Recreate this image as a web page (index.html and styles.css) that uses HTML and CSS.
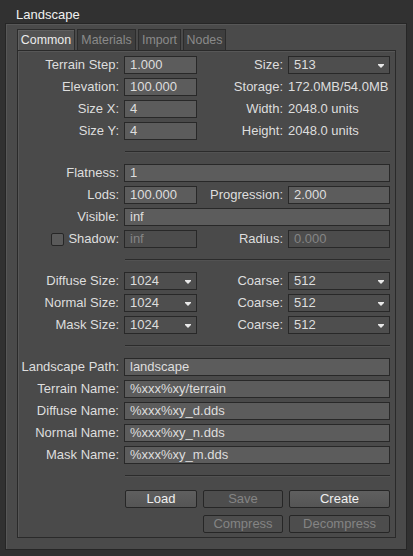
FILE: index.html
```html
<!DOCTYPE html>
<html>
<head>
<meta charset="utf-8">
<link rel="stylesheet" href="styles.css">
</head>
<body>
<div class="window">
  <div class="titlebar">Landscape</div>
  <div class="body">
    <div class="tabs">
      <div class="tab active t1">Common</div>
      <div class="tab t2">Materials</div>
      <div class="tab t3">Import</div>
      <div class="tab t4">Nodes</div>
    </div>
    <div class="panel">
      <div class="grid">
        <div class="lbl">Terrain Step:</div>
        <div class="field">1.000</div>
        <div class="lbl">Size:</div>
        <div class="field select">513<span class="arrow"></span></div>

        <div class="lbl">Elevation:</div>
        <div class="field">100.000</div>
        <div class="lbl">Storage:</div>
        <div class="val">172.0MB/54.0MB</div>

        <div class="lbl">Size X:</div>
        <div class="field">4</div>
        <div class="lbl">Width:</div>
        <div class="val">2048.0 units</div>

        <div class="lbl">Size Y:</div>
        <div class="field">4</div>
        <div class="lbl">Height:</div>
        <div class="val">2048.0 units</div>
      </div>
      <div class="sep"></div>
      <div class="grid">
        <div class="lbl">Flatness:</div>
        <div class="field wide">1</div>

        <div class="lbl">Lods:</div>
        <div class="field">100.000</div>
        <div class="lbl">Progression:</div>
        <div class="field">2.000</div>

        <div class="lbl">Visible:</div>
        <div class="field wide">inf</div>

        <div class="lbl"><span class="check"></span>Shadow:</div>
        <div class="field disabled">inf</div>
        <div class="lbl">Radius:</div>
        <div class="field disabled">0.000</div>
      </div>
      <div class="sep"></div>
      <div class="grid">
        <div class="lbl">Diffuse Size:</div>
        <div class="field select">1024<span class="arrow"></span></div>
        <div class="lbl">Coarse:</div>
        <div class="field select">512<span class="arrow"></span></div>

        <div class="lbl">Normal Size:</div>
        <div class="field select">1024<span class="arrow"></span></div>
        <div class="lbl">Coarse:</div>
        <div class="field select">512<span class="arrow"></span></div>

        <div class="lbl">Mask Size:</div>
        <div class="field select">1024<span class="arrow"></span></div>
        <div class="lbl">Coarse:</div>
        <div class="field select">512<span class="arrow"></span></div>
      </div>
      <div class="sep"></div>
      <div class="grid">
        <div class="lbl">Landscape Path:</div>
        <div class="field wide">landscape</div>
        <div class="lbl">Terrain Name:</div>
        <div class="field wide">%xxx%xy/terrain</div>
        <div class="lbl">Diffuse Name:</div>
        <div class="field wide">%xxx%xy_d.dds</div>
        <div class="lbl">Normal Name:</div>
        <div class="field wide">%xxx%xy_n.dds</div>
        <div class="lbl">Mask Name:</div>
        <div class="field wide">%xxx%xy_m.dds</div>
      </div>
      <div class="sep"></div>
      <div class="buttons">
        <div class="btn">Load</div>
        <div class="btn disabled">Save</div>
        <div class="btn">Create</div>
        <div class="btn disabled compress">Compress</div>
        <div class="btn disabled">Decompress</div>
      </div>
    </div>
  </div>
</div>
</body>
</html>
```

FILE: styles.css
```css
html, body {
  margin: 0;
  padding: 0;
  background: #2f2f2f;
}
body {
  font-family: "Liberation Sans", Arial, sans-serif;
  font-size: 13px;
  color: #dedede;
}
.window {
  width: 413px;
  height: 556px;
  background: #313131;
  box-sizing: border-box;
  padding: 0 6px 6px 5px;
  display: flex;
  flex-direction: column;
}
.titlebar {
  height: 23px;
  line-height: 29px;
  padding-left: 11px;
  font-size: 13px;
  color: #f0f0f0;
  flex: none;
}
.body {
  flex: 1;
  background: #4a4a4a;
  border: 1px solid #262626;
  box-shadow: inset 1px 1px 0 #575757;
  padding: 5px 10px 11px 11px;
  display: flex;
  flex-direction: column;
}
.tabs {
  display: flex;
  gap: 2px;
  height: 21px;
  flex: none;
}
.tab {
  height: 21px;
  box-sizing: border-box;
  text-align: center;
  line-height: 20px;
  font-size: 12.4px;
  background: #3e3e3e;
  border: 1px solid #2c2c2c;
  border-bottom: none;
  color: #8a8a8a;
  white-space: nowrap;
}
.t1 { width: 58px; }
.t2 { width: 59px; }
.t3 { width: 43px; }
.t4 { width: 43px; }
.tab.active {
  background: #525252;
  color: #ececec;
  box-shadow: inset 1px 1px 0 #606060;
}
.panel {
  flex: 1;
  border: 1px solid #2a2a2a;
  box-shadow: inset 1px 1px 0 #575757;
  background: #4a4a4a;
  padding: 5px 4px 0 0;
}
.grid {
  display: grid;
  grid-template-columns: 101px 73px 81px 102px;
  column-gap: 5px;
  row-gap: 4px;
  grid-auto-rows: 18px;
}
.lbl {
  line-height: 18px;
  white-space: nowrap;
  display: flex;
  justify-content: flex-end;
  align-items: center;
}
.val {
  line-height: 18px;
  white-space: nowrap;
}
.field {
  box-sizing: border-box;
  height: 18px;
  background: #5c5c5c;
  border: 1px solid #282828;
  line-height: 16px;
  padding-left: 5px;
  position: relative;
  white-space: nowrap;
}
.field.wide {
  grid-column: 2 / 5;
}
.field.disabled {
  background: #4c4c4c;
  color: #858585;
}
.select {
  background: #4e4e4e;
}
.arrow {
  position: absolute;
  right: 5px;
  top: 8px;
  width: 0;
  height: 0;
  border-left: 3px solid transparent;
  border-right: 3px solid transparent;
  border-top: 3px solid #e8e8e8;
}
.arrow::after {
  content: "";
  position: absolute;
  left: -3px;
  top: -4px;
  width: 6px;
  height: 1px;
  background: #e8e8e8;
}
.check {
  width: 13px;
  height: 13px;
  box-sizing: border-box;
  border: 1px solid #262626;
  background: #5a5a5a;
  border-radius: 2px;
  margin-right: 4px;
}
.sep {
  margin: 11px 0 11px 107px;
  width: 265px;
  height: 1px;
  background: #2b2b2b;
  border-bottom: 1px solid #525252;
}
.buttons {
  display: grid;
  grid-template-columns: 72px 80px 101px;
  column-gap: 6px;
  row-gap: 7px;
  grid-auto-rows: 18px;
  margin-left: 107px;
  margin-top: 13px;
}
.btn {
  box-sizing: border-box;
  border: 1px solid #262626;
  border-radius: 2px;
  background: linear-gradient(#5f5f5f, #555555);
  text-align: center;
  line-height: 16px;
  color: #f0f0f0;
}
.btn.disabled {
  background: #4d4d4d;
  color: #848484;
}
.compress {
  grid-column: 2;
}
```
